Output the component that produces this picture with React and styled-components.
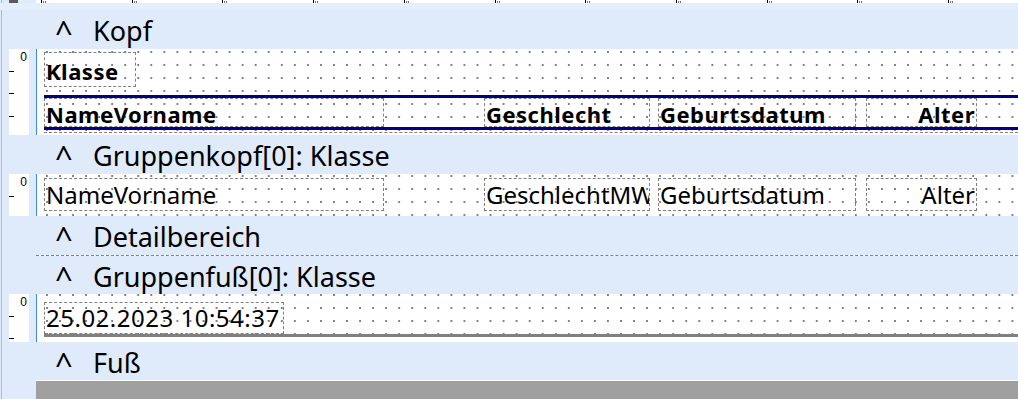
import React from "react";
import styled, { createGlobalStyle } from "styled-components";

const GlobalStyle = createGlobalStyle`
  html, body { margin: 0; padding: 0; }
  body {
    background: #dfebfa;
    font-family: "Noto Sans", "Open Sans", sans-serif;
    color: #000;
    overflow: hidden;
  }
`;

const Page = styled.div`
  width: 1018px;
  height: 399px;
  overflow: hidden;
  display: flex;
  flex-direction: column;
  background: linear-gradient(to right, #dfebfa 1px, #9fbbe7 1px, #9fbbe7 2px, transparent 2px), #dfebfa;
`;

const TopBar = styled.div`
  height: 10px;
  flex: none;
  display: flex;
  flex-direction: column;
`;

const RulerStrip = styled.div`
  height: 3px;
  display: flex;
`;

const Corner = styled.div`
  width: 9px;
  height: 3px;
  margin-left: 9px;
  background: #5a5a5a;
`;

const TopRuler = styled.svg`
  display: block;
  margin-left: 18px;
  flex: 1;
  height: 3px;
  background: #fff;
`;

const TopBand = styled.div`
  flex: 1;
  background: #e4eefc;
`;

const SectionHeader = styled.div`
  flex: none;
  box-sizing: border-box;
  height: ${(p) => p.$h}px;
  display: flex;
  align-items: center;
  padding: 2px 0 0 55px;
  font-size: 27px;
  line-height: 1;
  white-space: nowrap;
`;

const Caret = styled.span`
  width: 38px;
  flex: none;
  font-size: 31px;
  transform: translateY(1px);
`;

const Title = styled.span``;

const Band = styled.div`
  flex: none;
  display: flex;
  height: ${(p) => p.$h}px;
`;

const Gutter = styled.div`
  width: 36px;
  flex: none;
  padding-left: 9px;
  box-sizing: border-box;
`;

const RulerBox = styled.div`
  width: 20px;
  height: 100%;
  box-sizing: border-box;
  background-color: #fff;
  background-image: repeating-linear-gradient(
    to bottom,
    transparent 0,
    transparent 21.7px,
    #000 21.7px,
    #000 22.7px
  );
  background-size: 5px 100%;
  background-repeat: no-repeat;
  padding: 2px 2px 0 0;
  text-align: right;
  font-family: "Liberation Sans", sans-serif;
  font-size: 12px;
  line-height: 12px;
`;

const Canvas = styled.div`
  flex: 1;
  min-width: 0;
  border-left: 1px solid #3d8ce0;
  background-color: #fff;
  background-image: conic-gradient(at 2px 2px, transparent 75%, #7f7f7f 0);
  background-size: 13.06px 13px;
  background-position: 9px ${(p) => p.$dy}px;
  display: flex;
  flex-direction: column;
  padding-left: 7px;
  overflow: hidden;
`;

const Row = styled.div`
  display: flex;
  flex: none;
  margin-top: ${(p) => p.$mt || 0}px;
`;

const Field = styled.div`
  box-sizing: border-box;
  flex: none;
  width: ${(p) => p.$w}px;
  height: ${(p) => p.$h}px;
  margin-top: ${(p) => p.$mt || 0}px;
  margin-right: ${(p) => p.$mr || 0}px;
  border: 1px dashed #808080;
  display: flex;
  align-items: center;
  justify-content: ${(p) => (p.$right ? "flex-end" : "flex-start")};
  padding: ${(p) => (p.$bold ? "3px 1px 0" : "0 1px")};
  font-size: ${(p) => (p.$bold ? 22 : 24)}px;
  font-weight: ${(p) => (p.$bold ? 700 : 400)};
  letter-spacing: ${(p) => p.$ls || 0}px;
  line-height: 1;
  white-space: nowrap;
  overflow: ${(p) => (p.$clip ? "hidden" : "visible")};
`;

const RuleLine = styled.div`
  flex: none;
  height: 3px;
  margin-top: ${(p) => p.$mt || 0}px;
  background: ${(p) => p.$color};
`;

const DashLine = styled.div`
  flex: none;
  height: 0;
  margin-top: ${(p) => p.$mt || 0}px;
  border-top: 1px dashed #808080;
`;

const Divider = styled.div`
  flex: none;
  height: 0;
  margin-left: 36px;
  border-top: 1px dashed #808080;
  background: #fff;
`;

const FooterBase = styled.div`
  flex: 1;
  margin-left: 36px;
  border-top: 1px solid #fff;
  background: #a0a0a0;
`;

const Header = ({ title, h = 39 }) => (
  <SectionHeader $h={h}>
    <Caret>^</Caret>
    <Title>{title}</Title>
  </SectionHeader>
);

const Section = ({ h, dy, children }) => (
  <Band $h={h}>
    <Gutter>
      <RulerBox>0</RulerBox>
    </Gutter>
    <Canvas $dy={dy}>{children}</Canvas>
  </Band>
);

const majors = Array.from({ length: 11 }, (_, i) => Math.round(i * 90.7));

const columns = [
  { key: "name", w: 340, mr: 100 },
  { key: "g", w: 166, mr: 8 },
  { key: "d", w: 198, mr: 10 },
  { key: "a", w: 111, right: true },
];

export default function App() {
  return (
    <>
      <GlobalStyle />
      <Page>
        <TopBar>
          <RulerStrip>
            <Corner />
            <TopRuler viewBox="0 0 982 3" preserveAspectRatio="none">
              {majors.map((x) => (
                <g key={x}>
                  <rect x={x + 5} y="0" width="1" height="3" fill="#000" />
                  <rect x={x + 7} y="1" width="1" height="2" fill="#777" />
                  <rect x={x + 9} y="1" width="1" height="2" fill="#777" />
                </g>
              ))}
            </TopRuler>
          </RulerStrip>
          <TopBand />
        </TopBar>

        <Header title="Kopf" />
        <Section h={86} dy={2}>
          <Field $w={92} $h={35} $mt={3} $bold $ls={0.5}>
            Klasse
          </Field>
          <RuleLine $mt={8} $color="#000080" />
          <Row>
            {columns.map((c, i) => (
              <Field key={c.key} $w={c.w} $h={29} $mr={c.mr} $right={c.right} $bold $ls={0.5}>
                {["NameVorname", "Geschlecht", "Geburtsdatum", "Alter"][i]}
              </Field>
            ))}
          </Row>
          <RuleLine $color="#000080" />
          <DashLine $mt={2} />
        </Section>

        <Header title="Gruppenkopf[0]: Klasse" />
        <Section h={42} dy={1}>
          <Row $mt={4}>
            {columns.map((c, i) => (
              <Field key={c.key} $w={c.w} $h={33} $mr={c.mr} $right={c.right} $clip>
                {["NameVorname", "GeschlechtMW", "Geburtsdatum", "Alter"][i]}
              </Field>
            ))}
          </Row>
        </Section>

        <Header title="Detailbereich" />
        <Divider />

        <Header title="Gruppenfuß[0]: Klasse" h={38} />
        <Section h={48} dy={0}>
          <Field $w={240} $h={32} $mt={8} $ls={0.5}>
            25.02.2023 10:54:37
          </Field>
          <RuleLine $color="#808080" />
        </Section>

        <Header title="Fuß" h={38} />
        <FooterBase />
      </Page>
    </>
  );
}
